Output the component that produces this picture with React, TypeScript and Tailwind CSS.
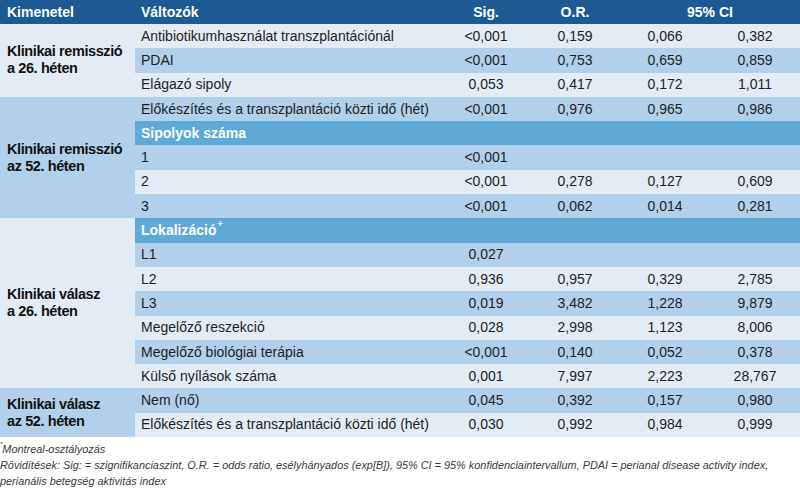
const LIGHT = "bg-[#e3ebf5]";
const MID = "bg-[#b2d0ea]";
const SECTION = "bg-[#5ea9d7]";

type Row =
  | { kind: "data"; label: string; sig: string; or?: string; lo?: string; hi?: string; bg: string }
  | { kind: "section"; label: string; sup?: string };

type Group = { title: [string, string]; bg: string; rows: Row[] };

const groups: Group[] = [
  {
    title: ["Klinikai remisszió", "a 26. héten"],
    bg: LIGHT,
    rows: [
      { kind: "data", label: "Antibiotikumhasználat transzplantációnál", sig: "<0,001", or: "0,159", lo: "0,066", hi: "0,382", bg: LIGHT },
      { kind: "data", label: "PDAI", sig: "<0,001", or: "0,753", lo: "0,659", hi: "0,859", bg: MID },
      { kind: "data", label: "Elágazó sipoly", sig: "0,053", or: "0,417", lo: "0,172", hi: "1,011", bg: LIGHT },
    ],
  },
  {
    title: ["Klinikai remisszió", "az 52. héten"],
    bg: MID,
    rows: [
      { kind: "data", label: "Előkészítés és a transzplantáció közti idő (hét)", sig: "<0,001", or: "0,976", lo: "0,965", hi: "0,986", bg: MID },
      { kind: "section", label: "Sipolyok száma" },
      { kind: "data", label: "1", sig: "<0,001", bg: MID },
      { kind: "data", label: "2", sig: "<0,001", or: "0,278", lo: "0,127", hi: "0,609", bg: LIGHT },
      { kind: "data", label: "3", sig: "<0,001", or: "0,062", lo: "0,014", hi: "0,281", bg: MID },
    ],
  },
  {
    title: ["Klinikai válasz", "a 26. héten"],
    bg: LIGHT,
    rows: [
      { kind: "section", label: "Lokalizáció", sup: "+" },
      { kind: "data", label: "L1", sig: "0,027", bg: MID },
      { kind: "data", label: "L2", sig: "0,936", or: "0,957", lo: "0,329", hi: "2,785", bg: LIGHT },
      { kind: "data", label: "L3", sig: "0,019", or: "3,482", lo: "1,228", hi: "9,879", bg: MID },
      { kind: "data", label: "Megelőző reszekció", sig: "0,028", or: "2,998", lo: "1,123", hi: "8,006", bg: LIGHT },
      { kind: "data", label: "Megelőző biológiai terápia", sig: "<0,001", or: "0,140", lo: "0,052", hi: "0,378", bg: MID },
      { kind: "data", label: "Külső nyílások száma", sig: "0,001", or: "7,997", lo: "2,223", hi: "28,767", bg: LIGHT },
    ],
  },
  {
    title: ["Klinikai válasz", "az 52. héten"],
    bg: MID,
    rows: [
      { kind: "data", label: "Nem (nő)", sig: "0,045", or: "0,392", lo: "0,157", hi: "0,980", bg: MID },
      { kind: "data", label: "Előkészítés és a transzplantáció közti idő (hét)", sig: "0,030", or: "0,992", lo: "0,984", hi: "0,999", bg: LIGHT },
    ],
  },
];

export default function App() {
  return (
    <div
      className="w-[800px] h-[490px] bg-white text-[#1e1e1e] overflow-hidden"
      style={{ fontFamily: '"Liberation Sans", Arial, sans-serif' }}
    >
      <table className="w-[800px] border-collapse table-fixed text-[14px]">
        <colgroup>
          <col className="w-[135px]" />
          <col className="w-[307px]" />
          <col className="w-[88px]" />
          <col className="w-[90px]" />
          <col className="w-[90px]" />
          <col className="w-[90px]" />
        </colgroup>
        <thead>
          <tr className="h-[24px] bg-[#1d5a93] text-white">
            <th className="text-left pl-[7px] font-bold">Kimenetel</th>
            <th className="text-left pl-[6px] font-bold">Változók</th>
            <th className="text-center font-bold">Sig.</th>
            <th className="text-center font-bold">O.R.</th>
            <th colSpan={2} className="text-center font-bold">95% CI</th>
          </tr>
        </thead>
        <tbody>
          {groups.map((g) =>
            g.rows.map((r, i) => (
              <tr key={g.title.join() + i} className="h-[24.3px]">
                {i === 0 && (
                  <td
                    rowSpan={g.rows.length}
                    className={`${g.bg} pl-[7px] align-middle font-bold text-[14.5px] tracking-[-0.4px] leading-[17px] text-[#111]`}
                  >
                    {g.title[0]}
                    <br />
                    {g.title[1]}
                  </td>
                )}
                {r.kind === "section" ? (
                  <td colSpan={5} className={`${SECTION} pl-[6px] text-white font-bold`}>
                    {r.label}
                    {r.sup && <sup className="text-[9px] align-[4px] ml-[1px]">{r.sup}</sup>}
                  </td>
                ) : (
                  <>
                    <td className={`${r.bg} pl-[6px] whitespace-nowrap`}>{r.label}</td>
                    <td className={`${r.bg} text-center`}>{r.sig}</td>
                    <td className={`${r.bg} text-center`}>{r.or ?? ""}</td>
                    <td className={`${r.bg} text-center`}>{r.lo ?? ""}</td>
                    <td className={`${r.bg} text-center`}>{r.hi ?? ""}</td>
                  </>
                )}
              </tr>
            ))
          )}
        </tbody>
      </table>
      <div className="pt-[4px] text-[10.9px] leading-[16px] italic text-[#3a3a3a]">
        <p>
          <sup className="text-[6px] align-[4px]">*</sup>Montreal-osztályozás
        </p>
        <p>
          Rövidítések: Sig: = szignifikanciaszint, O.R. = odds ratio, esélyhányados (exp[B]), 95% CI = 95% konfidenciaintervallum, PDAI = perianal disease activity index,
        </p>
        <p>perianális betegség aktivitás index</p>
      </div>
    </div>
  );
}
